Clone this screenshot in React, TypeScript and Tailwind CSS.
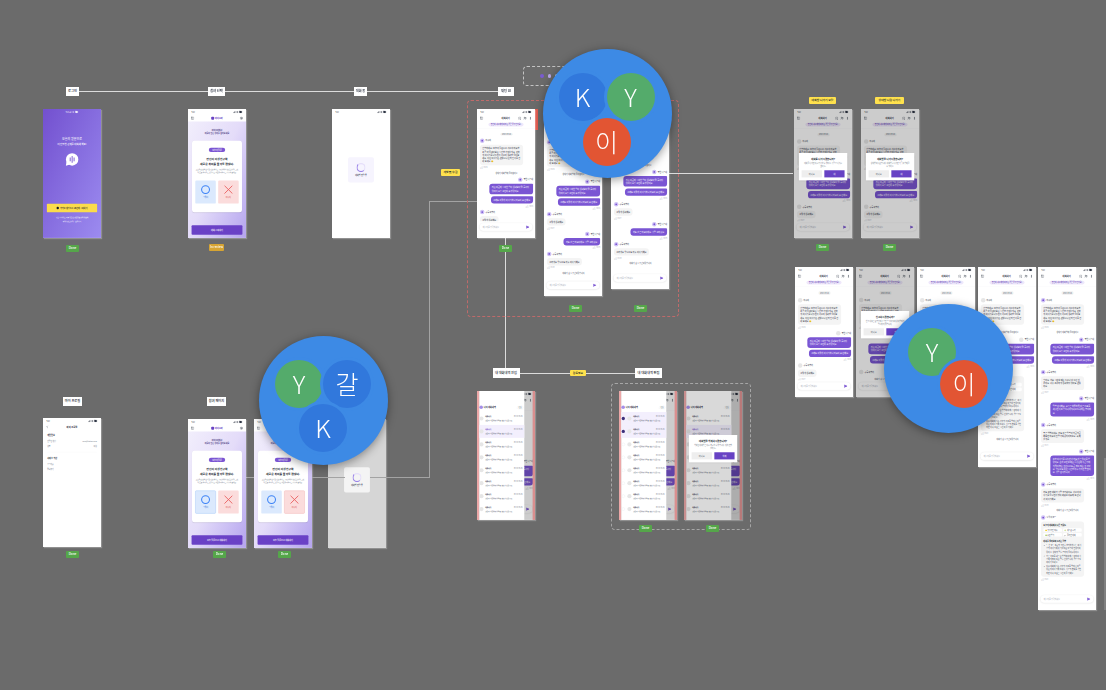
import React from "react"
import {
  BatteryFull,
  ChevronLeft,
  Bookmark,
  EllipsisVertical,
  PanelLeft,
  SendHorizontal,
  Settings,
  Signal,
  UserPlus,
  Wifi,
} from "lucide-react"

// ── Types ─────────────────────────────────────────────────────────────────

type Item =
  | { kind: "date" | "system"; text: string }
  | { kind: "in" | "out"; name: string; bubbles: string[]; time?: string }
  | { kind: "rich"; name: string; time: string }

// ── Chat data ─────────────────────────────────────────────────────────────

const DATE: Item = { kind: "date", text: "2025.03.24" }
const SYS_START: Item = { kind: "system", text: "상대가 대화방에 들어왔어요" }
const SYS_END: Item = { kind: "system", text: "대화가 잠시 중단되었습니다" }

const BOT_LONG: Item = {
  kind: "in",
  name: "마음이",
  bubbles: [
    "안녕하세요! 오늘의 질문으로 서로의 마음을 조금 더 들여다보는 시간을 가져볼게요. 편하게 이야기를 나누면서 서로의 생각을 들어보세요. 어떤 이야기든 괜찮으니 먼저 인사를 건네 보세요 😊",
  ],
  time: "오전 10:24",
}
const ME_PAIR: Item = {
  kind: "out",
  name: "별빛 나그네",
  bubbles: [
    "저는 최근에 시작한 일이 생각보다 잘 풀리지 않아서 요즘 고민이 좀 많았어요.",
    "그래도 이렇게 이야기하니 마음이 좀 편해요.",
  ],
  time: "오전 10:26",
}
const OTHER_SHORT: Item = { kind: "in", name: "구름 여행자", bubbles: ["그렇게 생각해요"], time: "오전 10:27" }
const OTHER_NAME_ONLY: Item = { kind: "in", name: "구름 여행자", bubbles: [] }
const ME_SHORT: Item = {
  kind: "out",
  name: "별빛 나그네",
  bubbles: ["저도 같은 마음이에요. 정말 고마워요."],
  time: "오전 10:29",
}
const OTHER_MID: Item = {
  kind: "in",
  name: "구름 여행자",
  bubbles: ["그러게요 앞으로도 자주 이야기해요"],
  time: "오전 10:30",
}
const RICH: Item = { kind: "rich", name: "요약 리포트", time: "오전 10:41" }

const SCREEN_A: Item[] = [DATE, BOT_LONG, SYS_START, ME_PAIR, OTHER_SHORT]
const SCREEN_B: Item[] = [DATE, BOT_LONG, SYS_START, ME_PAIR, OTHER_SHORT, ME_SHORT, OTHER_MID, SYS_END]
const SCREEN_C: Item[] = [
  DATE,
  { ...BOT_LONG, bubbles: ["안녕하세요! 오늘의 질문으로 서로의 마음을 조금 더 들여다보는 시간을 가져볼게요."] } as Item,
  SYS_START,
  ME_PAIR,
  OTHER_SHORT,
  ME_SHORT,
  OTHER_MID,
  SYS_END,
]
const SCREEN_F: Item[] = [DATE, BOT_LONG, ME_PAIR, OTHER_SHORT]
const SCREEN_G: Item[] = [DATE, BOT_LONG, SYS_START, ME_PAIR, OTHER_NAME_ONLY, SYS_END]
const SCREEN_I: Item[] = [DATE, BOT_LONG, SYS_START, ME_PAIR, RICH, SYS_END]
const SCREEN_J: Item[] = [
  DATE,
  BOT_LONG,
  SYS_START,
  ME_PAIR,
  {
    kind: "in",
    name: "구름 여행자",
    bubbles: ["맞아요. 처음 시작할 때는 누구나 다 그런 것 같아요. 너무 조급하게 생각하지 않아도 괜찮아요."],
    time: "오전 10:27",
  },
  {
    kind: "out",
    name: "별빛 나그네",
    bubbles: ["말씀 감사해요. 요즘은 하루하루 작은 목표를 세우면서 조금씩 나아지려고 노력하는 중이에요."],
    time: "오전 10:29",
  },
  {
    kind: "in",
    name: "구름 여행자",
    bubbles: ["좋은 방법이네요. 저도 작은 일부터 차근차근 해보면 마음이 한결 가벼워지더라고요. 꼭 해볼게요."],
    time: "오전 10:31",
  },
  {
    kind: "out",
    name: "별빛 나그네",
    bubbles: [
      "오늘 이야기를 나누면서 저도 많은 위로를 받았어요. 혼자 고민할 때는 몰랐는데 누군가에게 털어놓는 것만으로도 큰 힘이 되는 것 같아요. 앞으로도 이런 시간을 자주 가지면 좋겠어요. 정말 감사합니다.",
    ],
    time: "오전 10:35",
  },
  {
    kind: "in",
    name: "구름 여행자",
    bubbles: ["저도 오늘 대화가 정말 즐거웠어요. 서로의 이야기를 들으면서 많이 배웠고 다음에 또 만나서 이야기해요."],
    time: "오전 10:38",
  },
  SYS_END,
  RICH,
]

const DRAWER_ROWS = [0, 1, 2, 3, 4, 5, 6, 7]

// ── Small parts of a phone screen ─────────────────────────────────────────

function StatusBar({ light }: { light?: boolean }) {
  return (
    <div className={`flex h-10 shrink-0 items-center justify-between px-6 text-xs ${light ? "text-white" : "text-gray-900"}`}>
      <span>9:41</span>
      <span className="flex items-center gap-1">
        <Signal size={16} strokeWidth={3} />
        <Wifi size={16} strokeWidth={3} />
        <BatteryFull size={22} strokeWidth={2} fill="currentColor" />
      </span>
    </div>
  )
}

function Avatar({ accent, size = "size-[30px]" }: { accent: boolean; size?: string }) {
  return (
    <span className={`flex shrink-0 items-center justify-center rounded-full ${size} ${accent ? "bg-[#cfc2f5]" : "bg-[#e6e6e6]"}`}>
      {accent && <span className="size-3 rounded-full bg-[#7a55d3]" />}
    </span>
  )
}

function RichBubble() {
  const chips = ["🙂 긍정적인 마음", "🌱 새로운 시작", "🍀 응원 받기", "💬 솔직한 대화"]
  return (
    <div className="mt-3 w-[290px] rounded-[20px] bg-[#f4f4f4] px-4 py-4 text-[13px] leading-[21px] text-gray-700">
      <p className="font-bold text-gray-900">오늘의 대화에서 나온 키워드</p>
      <div className="mt-2 grid grid-cols-2 gap-x-2 gap-y-2 text-xs">
        {chips.map((c) => (
          <span key={c} className="rounded-lg bg-white px-2 py-1">{c}</span>
        ))}
      </div>
      <p className="mt-5 font-bold text-gray-900">대화를 돌아보며 드리는 말씀</p>
      <ul className="mt-2 list-disc space-y-2 pl-5">
        <li>두 분 모두 최근의 고민을 솔직하게 나누며 서로의 이야기에 귀 기울이는 모습이 인상적이었어요. 상대의 말을 끝까지 들어주었어요.</li>
        <li>작은 목표를 세우는 방법에 대해 공감하며 서로에게 힘이 되는 말을 건넸습니다. 앞으로도 이어가 보세요.</li>
        <li>다음 대화에서는 각자의 목표를 얼마나 이루었는지 이야기해 보세요. 서로의 변화를 확인하면 더욱 뜻깊은 시간이 될 거예요.</li>
      </ul>
    </div>
  )
}

function ChatItem({ item, accent }: { item: Item; accent: boolean }) {
  if (item.kind === "date") {
    return <p className="mx-auto flex h-[26px] items-center rounded-full bg-[#f3f3f3] px-3 text-xs text-gray-600">{item.text}</p>
  }
  if (item.kind === "system") {
    return <p className="flex h-6 items-center justify-center text-[13px] text-gray-700">{item.text}</p>
  }
  const isOut = item.kind === "out"
  return (
    <div className={`flex flex-col ${isOut ? "items-end" : "items-start"}`}>
      <div className="flex h-[30px] items-center gap-2 text-[13px] text-gray-800">
        <Avatar accent={accent} />
        {item.name}
      </div>
      {item.kind === "rich" ? (
        <RichBubble />
      ) : (
        item.bubbles.map((b) => (
          <p
            key={b}
            className={
              isOut
                ? "mt-3 w-fit max-w-[294px] rounded-[20px] rounded-tr-md bg-[#7a55d3] px-4 py-3.5 text-sm leading-[22px] text-white"
                : "mt-3 w-fit max-w-[290px] rounded-[20px] bg-[#f4f4f4] px-4 py-3.5 text-sm leading-[22px] text-gray-800"
            }
          >
            {b}
          </p>
        ))
      )}
      {item.time && <span className="mt-2 h-3.5 text-[11px] leading-[14px] text-gray-400">{item.time}</span>}
    </div>
  )
}

function ChatScreen({ items, accent = true, children }: { items: Item[]; accent?: boolean; children?: React.ReactNode }) {
  return (
    <div className="relative flex h-full flex-col bg-white">
      <StatusBar />
      <div className="flex h-11 shrink-0 items-center justify-between px-5 text-gray-800">
        <PanelLeft size={22} />
        <span className="ml-[68px] text-[15px] font-bold">대화하기</span>
        <span className="flex items-center gap-3.5">
          <Bookmark size={22} />
          <UserPlus size={22} />
          <EllipsisVertical size={22} />
        </span>
      </div>
      <div className="flex h-[50px] shrink-0 items-center justify-center border-b-2 border-gray-100 pb-3 pt-1.5">
        <span className="rounded-full bg-[#efe8fb] px-4 py-1 text-xs font-medium text-[#5b3bb5]">연인이 서로에게 바라는 점은 무엇인가요?</span>
      </div>
      <div className="flex min-h-0 flex-1 flex-col gap-5 overflow-hidden pl-5 pr-[13px] pt-7">
        {items.map((item, i) => (
          <ChatItem key={i} item={item} accent={accent} />
        ))}
      </div>
      <div className="h-[110px] shrink-0 bg-white px-[18px] pt-3">
        <div className="flex h-[50px] items-center justify-between rounded-full bg-white px-5 text-[13px] text-gray-400 shadow-[0_2px_14px_rgba(0,0,0,0.14)]">
          메시지를 입력하세요
          <SendHorizontal size={24} fill="#7a55d3" className="text-[#7a55d3]" />
        </div>
      </div>
      {children}
    </div>
  )
}

function ConfirmModal({ title, body, left, right, dim = "bg-black/20" }: { title: string; body: string; left: string; right: string; dim?: string }) {
  return (
    <div className={`absolute inset-0 ${dim}`}>
      <div className="absolute left-[33px] top-[296px] w-[325px] bg-white px-[18px] pb-5 pt-7 text-center shadow-lg">
        <p className="text-base font-bold text-gray-900">{title}</p>
        <p className="mx-auto mt-2 w-[260px] text-xs leading-5 text-gray-500">{body}</p>
        <div className="mt-4 grid grid-cols-2 gap-4">
          <span className="flex h-12 items-center justify-center bg-[#eeeeee] text-sm text-gray-600">{left}</span>
          <span className="flex h-12 items-center justify-center bg-[#6742c4] text-sm text-white">{right}</span>
        </div>
      </div>
    </div>
  )
}

// ── Whole screens ─────────────────────────────────────────────────────────

function LoginScreen() {
  return (
    <div className="flex h-full flex-col items-center bg-gradient-to-br from-[#7350cf] to-[#9c8bf0] text-white">
      <StatusBar light />
      <p className="mt-[143px] text-center text-xl leading-[34px]">오늘의 질문으로</p>
      <p className="text-center text-base font-medium leading-[34px]">더 친밀한 관계를 대화해 봐요!</p>
      <svg viewBox="0 0 90 90" className="mt-11 size-[90px]">
        <circle cx="46" cy="44" r="42" fill="#fff" />
        <path d="M8 60 L4 86 L32 78 Z" fill="#fff" />
        <path d="M33 34v20M46 24v40M59 34v20" stroke="#7350cf" strokeWidth="6" strokeLinecap="round" />
      </svg>
      <div className="mt-[252px] flex h-[58px] w-[338px] items-center justify-center gap-2 rounded-md bg-[#fbdc4b] text-[13px] font-medium text-gray-900">
        <span className="size-4 rounded-full bg-gray-900" />
        카카오 계정으로 1초만에 시작하기
      </div>
      <p className="mt-7 text-[11px]">가입 시 서비스 이용약관 및 개인정보 처리방침에</p>
      <p className="mt-2 text-[11px]">동의하게 됩니다 · 문의하기</p>
    </div>
  )
}

function ChoiceScreen({ cta, picked }: { cta: string; picked?: "yes" | "no" }) {
  return (
    <div className="flex h-full flex-col bg-gradient-to-br from-[#f3f0fc] via-[#e4dcf9] to-[#b5a4ee]">
      <div className="h-[84px] shrink-0 bg-white">
        <StatusBar />
        <div className="flex h-11 items-center justify-between px-5 text-gray-800">
          <PanelLeft size={22} />
          <span className="flex items-center gap-1.5 text-sm font-bold text-[#6742c4]">
            <span className="size-5 rounded-md bg-[#6742c4]" />
            마이오마
          </span>
          <Settings size={22} />
        </div>
      </div>
      <p className="mt-[46px] text-center text-[13px] font-medium leading-[23px] text-[#3a2b77]">
        마이오마에서
        <br />
        마음이 맞는 상대를 찾아보세요
      </p>
      <div className="mx-auto mt-[37px] flex h-[482px] w-[336px] flex-col items-center rounded-2xl bg-white px-[22px] pt-12 shadow-md">
        <span className="rounded-full bg-[#7b55d3] px-6 py-1 text-[13px] font-medium text-white">오늘의 질문</span>
        <p className="mt-[30px] text-center text-[19px] font-bold leading-[31px] text-gray-900">
          연인이 이성친구와
          <br />
          새로운 취미를 즐겨도 괜찮다.
        </p>
        <p className="mt-4 text-center text-[11px] leading-5 text-gray-500">
          오늘의 질문에 답하면 같은 생각을 가진 상대와 연결됩니다. 그렇다 또는 아니다를 선택하고 서로의 이야기를 나누어 보세요.
        </p>
        <div className="mt-11 grid w-full grid-cols-2 gap-4">
          <div className={`flex h-[155px] flex-col items-center justify-center rounded-lg bg-[#dbe9fd] ${picked === "yes" ? "border-2 border-[#7fb0f6]" : ""}`}>
            <span className="size-[60px] rounded-full border-[7px] border-[#3b82f6]" />
            <span className="mt-3 text-[13px] text-[#2f6fd6]">그렇다</span>
          </div>
          <div className={`flex h-[155px] flex-col items-center justify-center rounded-lg bg-[#fbdcdc] ${picked === "no" ? "border-2 border-[#ef9a9a]" : ""}`}>
            <svg viewBox="0 0 60 60" className="size-[60px]">
              <path d="M5 5L55 55M55 5L5 55" stroke="#ea5f5f" strokeWidth="6" strokeLinecap="round" />
            </svg>
            <span className="mt-3 text-[13px] text-[#d94a4a]">아니다</span>
          </div>
        </div>
      </div>
      <div className="mx-auto mt-[87px] flex h-[63px] w-[342px] items-center justify-center rounded-md bg-[#6a41c6] text-sm font-medium text-white">
        {cta}
      </div>
    </div>
  )
}

function LoadingScreen({ dim }: { dim?: boolean }) {
  return (
    <div className={`flex h-full flex-col ${dim ? "bg-[#d6d6d6]" : "bg-white"}`}>
      <StatusBar />
      <div className="flex flex-1 items-center justify-center pb-[87px]">
        <div className={`flex h-[170px] w-[174px] flex-col items-center justify-center gap-3 rounded-xl ${dim ? "bg-[#f4f4f4]" : "bg-[#f6f4fe]"}`}>
          <span className="size-[62px] rounded-full border-[8px] border-[#e5defa] border-b-[#9b84e8] border-l-[#9b84e8]" />
          <span className="text-[13px] font-medium text-gray-700">대화방 연결 중</span>
        </div>
      </div>
    </div>
  )
}

function ProfileScreen() {
  return (
    <div className="flex h-full flex-col bg-white text-gray-800">
      <StatusBar />
      <div className="flex h-10 items-center justify-between px-4">
        <ChevronLeft size={24} />
        <span className="text-[15px] font-bold">마이 프로필</span>
        <span className="w-6" />
      </div>
      <div className="mt-7 px-7">
        <p className="text-sm font-bold">계정정보</p>
        <p className="mt-5 flex justify-between text-xs text-gray-500">
          <span>연결된 계정</span>
          <span>user@kakao.com</span>
        </p>
        <p className="mt-5 flex justify-between text-xs text-gray-500">
          <span>성별</span>
          <span>여성</span>
        </p>
        <div className="mt-7 border-t-2 border-gray-100" />
        <p className="mt-8 text-sm font-bold">서비스 약관</p>
        <p className="mt-5 text-xs text-gray-500">로그아웃</p>
        <p className="mt-5 text-xs text-gray-500">탈퇴하기</p>
      </div>
    </div>
  )
}

function DrawerScreen({ highlight, checks, modal }: { highlight: number[]; checks?: boolean; modal?: boolean }) {
  return (
    <ChatScreen items={SCREEN_A}>
      <div className="absolute inset-0 flex bg-black/20">
        <div className="w-4 bg-[#eba7a7]" />
        <div className="w-[302px] bg-white">
          <div className="flex h-[141px] items-end justify-between pb-5 pr-2">
            <span className="flex items-center gap-1.5 text-sm font-bold text-gray-800">
              <span className="size-6 rounded-full bg-[#a48fe8]" />
              나의 대화내역
            </span>
            <span className="rounded-md border border-gray-300 px-2 text-xs text-gray-500">편집</span>
          </div>
          {DRAWER_ROWS.map((row) => {
            const on = highlight.includes(row)
            return (
              <div key={row} className={`flex h-[87px] items-center gap-3 pr-3 ${on ? "bg-[#f3effd]" : ""}`}>
                {checks && (
                  <span className={`ml-0.5 mr-1 size-[22px] shrink-0 rounded-full ${on ? "bg-[#3d2f7a]" : "border-2 border-gray-200"}`} />
                )}
                <Avatar accent={false} size="size-7" />
                <div className="min-w-0 flex-1 text-[11px] leading-[24px]">
                  <p className="flex justify-between">
                    <span className={`font-bold ${on && !checks ? "text-[#6742c4]" : "text-gray-800"}`}>대화하기</span>
                    <span className="text-gray-500">03.24 10:24</span>
                  </p>
                  <p className="truncate text-gray-600">연인이 서로에게 바라는 점은 무엇인가요</p>
                </div>
              </div>
            )
          })}
        </div>
        <div className="ml-auto w-4 bg-[#d98f8f]" />
      </div>
      {modal && (
        <ConfirmModal
          title="대화방을 삭제하시겠습니까?"
          body="삭제된 대화방은 다시 복구할 수 없습니다. 계속 진행할까요?"
          left="아니요"
          right="삭제"
          dim="bg-black/15"
        />
      )}
    </ChatScreen>
  )
}

// ── Canvas parts ──────────────────────────────────────────────────────────

function Phone({ frame, screen, children }: { frame: string; screen: string; children: React.ReactNode }) {
  return (
    <div className={`absolute overflow-hidden bg-white shadow-[1px_1px_1px_rgba(255,255,255,0.25)] ${frame}`}>
      <div className={`w-[390px] origin-top-left scale-[0.1487] ${screen}`}>{children}</div>
    </div>
  )
}

function FlowLabel({ pos, children }: { pos: string; children: React.ReactNode }) {
  return (
    <div className={`absolute z-10 flex items-center justify-center whitespace-nowrap bg-white text-[3.2px] font-medium text-gray-900 ${pos}`}>
      {children}
    </div>
  )
}

function NoteLabel({ pos, children }: { pos: string; children: React.ReactNode }) {
  return (
    <div className={`absolute z-10 flex items-center justify-center whitespace-nowrap rounded-[1px] bg-[#ffe14d] text-[2.8px] font-medium text-gray-900 ${pos}`}>
      {children}
    </div>
  )
}

function DoneBadge({ pos }: { pos: string }) {
  return (
    <div className={`absolute z-10 flex h-[6.5px] w-[13px] items-center justify-center rounded-[1px] bg-[#55a64a] text-[3px] font-medium text-white ${pos}`}>
      Done
    </div>
  )
}

function Presence({ pos, people }: { pos: string; people: { label: string; color: string; at: string }[] }) {
  return (
    <div className={`absolute z-20 size-[129px] rounded-full bg-[#3d8ae5] shadow-[0_2px_10px_rgba(0,0,0,0.4)] ${pos}`}>
      {people.map((p) => (
        <div
          key={p.label}
          className={`absolute flex size-12 items-center justify-center rounded-full text-[25px] font-light text-white ring-[3px] ring-[#3d8ae5] ${p.color} ${p.at}`}
        >
          {p.label}
        </div>
      ))}
    </div>
  )
}

// ── Page ──────────────────────────────────────────────────────────────────

export default function App() {
  return (
    <div className="relative h-[690px] w-[1106px] overflow-hidden bg-[#6b6b6b] font-['Noto_Sans_CJK_KR','Noto_Sans',sans-serif]">
      <div className="absolute inset-0 blur-[0.3px]">
        {/* Connectors */}
        <div className="absolute left-[79px] top-[91px] h-px w-[419px] bg-[#dcdcdc]" />
        <div className="absolute left-[505px] top-[238px] h-[130px] w-px bg-[#dcdcdc]" />
        <div className="absolute left-[669px] top-[173px] h-px w-[124px] bg-[#dcdcdc]" />
        <div className="absolute left-[519px] top-[373px] h-px w-[116px] bg-[#dcdcdc]" />
        <div className="absolute left-[429px] top-[201px] h-[277px] w-px bg-[#a3a3a3]" />
        <div className="absolute left-[429px] top-[201px] h-px w-[48px] bg-[#a3a3a3]" />
        <div className="absolute left-[246px] top-[477px] h-px w-[183px] bg-[#a3a3a3]" />

        {/* Group outlines */}
        <div className="absolute left-[523px] top-[66px] flex h-5 w-[90px] items-center gap-1 rounded-sm border border-dashed border-[#c4c4c4] pl-4">
          <span className="size-[3.5px] rounded-full bg-[#7a5bd0]" />
          <span className="size-[3.5px] rounded-full bg-[#b9a8ec]" />
          <span className="size-[3.5px] rounded-full bg-[#dcdcdc]" />
        </div>
        <div className="absolute left-[467px] top-[100px] h-[217px] w-[212px] rounded-sm border border-dashed border-[#bf6a6a]" />
        <div className="absolute left-[611px] top-[383px] h-[147px] w-[140px] rounded-sm border border-dashed border-[#a6a6a6]" />

        {/* Top row */}
        <Phone frame="left-[43px] top-[109px] h-[129px] w-[58px]" screen="h-[867px]">
          <LoginScreen />
        </Phone>
        <Phone frame="left-[188px] top-[109px] h-[129px] w-[58px]" screen="h-[867px]">
          <ChoiceScreen cta="대화 시작하기" />
        </Phone>
        <Phone frame="left-[332px] top-[109px] h-[129px] w-[58px]" screen="h-[867px]">
          <LoadingScreen />
        </Phone>

        <div className="absolute left-[534px] top-[109px] h-[21px] w-1 bg-[#e25a4f]" />
        <Phone frame="left-[476.5px] top-[109px] h-[129px] w-[58px]" screen="h-[867px]">
          <ChatScreen items={SCREEN_A} />
        </Phone>
        <Phone frame="left-[544px] top-[109px] h-[187px] w-[58px]" screen="h-[1258px]">
          <ChatScreen items={SCREEN_B} />
        </Phone>
        <Phone frame="left-[611px] top-[109px] h-[180px] w-[58px]" screen="h-[1210px]">
          <ChatScreen items={SCREEN_C} />
        </Phone>

        {/* Exit confirm states */}
        <Phone frame="left-[793.5px] top-[109px] h-[129px] w-[58px]" screen="h-[867px]">
          <ChatScreen items={SCREEN_F} accent={false}>
            <ConfirmModal title="대화를 나가시겠습니까?" body="대화를 나가면 다시 입장할 수 없어요. 정말로 나가시겠어요?" left="아니요" right="네" />
          </ChatScreen>
        </Phone>
        <Phone frame="left-[861px] top-[109px] h-[129px] w-[58px]" screen="h-[867px]">
          <ChatScreen items={SCREEN_F} accent={false}>
            <ConfirmModal title="대화방을 나가시겠습니까?" body="상대방이 나갔습니다. 대화방을 나가면 기록이 삭제될 수 있어요." left="아니요" right="네" />
          </ChatScreen>
        </Phone>

        {/* Right cluster */}
        <Phone frame="left-[794.5px] top-[267px] h-[130px] w-[58px]" screen="h-[874px]">
          <ChatScreen items={SCREEN_F} accent={false} />
        </Phone>
        <Phone frame="left-[855.5px] top-[267px] h-[130px] w-[58px]" screen="h-[874px]">
          <ChatScreen items={SCREEN_G} accent={false}>
            <ConfirmModal title="신고하시겠습니까?" body="신고 내용은 운영팀에서 확인 후 처리되며 상대방에게 알려지지 않습니다." left="아니요" right="신고" />
          </ChatScreen>
        </Phone>
        <Phone frame="left-[916.5px] top-[267px] h-[130px] w-[58px]" screen="h-[874px]">
          <ChatScreen items={SCREEN_F} accent={false} />
        </Phone>
        <Phone frame="left-[977.5px] top-[267px] h-[200px] w-[58px]" screen="h-[1345px]">
          <ChatScreen items={SCREEN_I} accent={false} />
        </Phone>
        <Phone frame="left-[1038px] top-[267px] h-[343px] w-[58px]" screen="h-[2306px]">
          <ChatScreen items={SCREEN_J} />
        </Phone>
        <div className="absolute left-[1104px] top-[458px] h-[152px] w-[2px] bg-[#808080]" />

        {/* Bottom row */}
        <Phone frame="left-[43px] top-[418px] h-[129px] w-[58px]" screen="h-[867px]">
          <ProfileScreen />
        </Phone>
        <Phone frame="left-[188px] top-[419px] h-[129px] w-[58px]" screen="h-[867px]">
          <ChoiceScreen cta="오늘 질문으로 대화하기" picked="yes" />
        </Phone>
        <Phone frame="left-[253.5px] top-[419px] h-[129px] w-[58px]" screen="h-[867px]">
          <ChoiceScreen cta="오늘 질문으로 대화하기" picked="no" />
        </Phone>
        <Phone frame="left-[328px] top-[419px] h-[129px] w-[58px]" screen="h-[867px]">
          <LoadingScreen dim />
        </Phone>
        <div className="absolute left-[311.5px] top-[477px] h-px w-[33px] bg-[#a3a3a3]" />
        <div className="absolute left-[370px] top-[477px] h-px w-[59px] bg-[#a3a3a3]" />

        {/* Chat history drawer */}
        <Phone frame="left-[476.5px] top-[391px] h-[129px] w-[58px]" screen="h-[867px]">
          <DrawerScreen highlight={[1]} />
        </Phone>
        <Phone frame="left-[619px] top-[391px] h-[129px] w-[58px]" screen="h-[867px]">
          <DrawerScreen highlight={[0, 1]} checks />
        </Phone>
        <Phone frame="left-[684px] top-[391px] h-[129px] w-[58px]" screen="h-[867px]">
          <DrawerScreen highlight={[1]} modal />
        </Phone>

        {/* Flow labels */}
        <FlowLabel pos="left-[66px] top-[87px] h-[9px] w-[13px]">로그인</FlowLabel>
        <FlowLabel pos="left-[208px] top-[87px] h-[9px] w-[17px]">참여 선택</FlowLabel>
        <FlowLabel pos="left-[354px] top-[87px] h-[9px] w-[13px]">대화 중</FlowLabel>
        <FlowLabel pos="left-[498px] top-[87px] h-[9px] w-[16px]">채팅 UI</FlowLabel>
        <FlowLabel pos="left-[63px] top-[397px] h-[9px] w-[19px]">마이 프로필</FlowLabel>
        <FlowLabel pos="left-[207px] top-[397px] h-[9px] w-[19px]">참여 페이지</FlowLabel>
        <FlowLabel pos="left-[492.5px] top-[368px] h-[10px] w-[27px]">내 대화내역 진입</FlowLabel>
        <FlowLabel pos="left-[635px] top-[368px] h-[10px] w-[27px]">내 대화내역 편집</FlowLabel>

        <NoteLabel pos="left-[441px] top-[169px] h-[7px] w-[19px]">개발중/수정</NoteLabel>
        <NoteLabel pos="left-[570px] top-[370px] h-[6px] w-[16px]">검토필요</NoteLabel>
        <NoteLabel pos="left-[809px] top-[97px] h-[6.5px] w-[27px]">대화방 나가기 모달</NoteLabel>
        <NoteLabel pos="left-[875px] top-[97px] h-[6.5px] w-[29px]">상대방 나감 나가기</NoteLabel>

        {/* Status badges */}
        <DoneBadge pos="left-[66px] top-[245px]" />
        <div className="absolute left-[209px] top-[244px] z-10 flex h-[7px] w-[15px] items-center justify-center rounded-[1px] bg-[#d6a433] text-[3px] font-medium text-white">
          In review
        </div>
        <DoneBadge pos="left-[499px] top-[245px]" />
        <DoneBadge pos="left-[569px] top-[305px]" />
        <DoneBadge pos="left-[634px] top-[305px]" />
        <DoneBadge pos="left-[816px] top-[244px]" />
        <DoneBadge pos="left-[883px] top-[244px]" />
        <DoneBadge pos="left-[66px] top-[551px]" />
        <DoneBadge pos="left-[213px] top-[551px]" />
        <DoneBadge pos="left-[278px] top-[551px]" />
        <DoneBadge pos="left-[639px] top-[525px]" />
        <DoneBadge pos="left-[706px] top-[525px]" />

        {/* Multiplayer cursors */}
        <Presence
          pos="left-[542.5px] top-[49px]"
          people={[
            { label: "K", color: "bg-[#3178dc]", at: "left-4 top-6" },
            { label: "Y", color: "bg-[#54ab6b]", at: "left-16 top-6" },
            { label: "이", color: "bg-[#e25533]", at: "left-10 top-[69px]" },
          ]}
        />
        <Presence
          pos="left-[259px] top-[336px]"
          people={[
            { label: "Y", color: "bg-[#54ab6b]", at: "left-4 top-6" },
            { label: "갈", color: "bg-[#3178dc]", at: "left-16 top-6" },
            { label: "K", color: "bg-[#3178dc]", at: "left-10 top-[68px]" },
          ]}
        />
        <Presence
          pos="left-[884px] top-[304px]"
          people={[
            { label: "Y", color: "bg-[#54ab6b]", at: "left-6 top-6" },
            { label: "이", color: "bg-[#e25533]", at: "left-14 top-14" },
          ]}
        />
      </div>
    </div>
  )
}
